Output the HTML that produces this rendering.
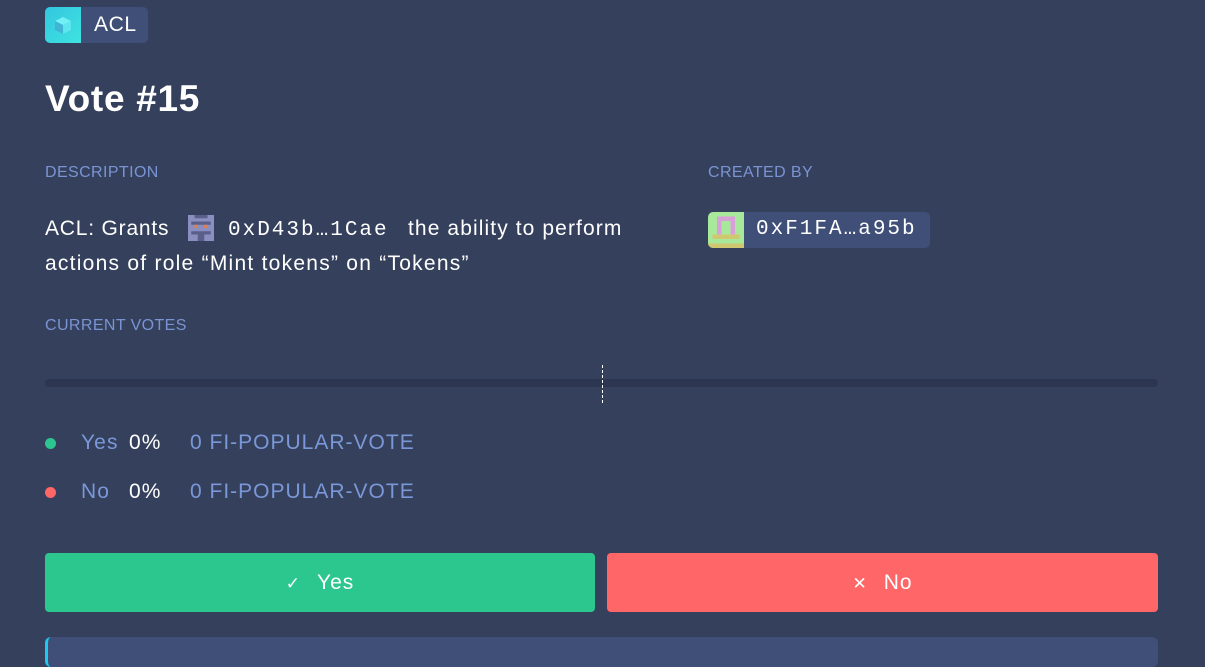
<!DOCTYPE html>
<html><head><meta charset="utf-8"><style>
*{box-sizing:border-box;margin:0;padding:0}
body{width:1205px;height:647px;overflow:hidden;background:#35415c;font-family:"Liberation Sans",sans-serif;color:#fff;position:relative}
.abs{position:absolute}
.lbl{font-size:16px;color:#7a93d4;letter-spacing:0.4px}
.mono{font-family:"Liberation Mono",monospace;letter-spacing:2px}
.blue{color:#7a97d8}
.txt{letter-spacing:1.1px}
</style></head><body>
<div class="abs" style="left:45px;top:7px;width:103px;height:36px;border-radius:5px;background:#3f4f77;overflow:hidden">
 <div class="abs" style="left:0;top:0;width:36px;height:36px;background:linear-gradient(135deg,#33c6e0,#3fe3e0)">
  <svg width="36" height="36" viewBox="0 0 36 36"><polygon points="18,10 26,14 18,18 10,14" fill="#72f0f6"/><polygon points="10,14 18,18 18,27 10,23" fill="#3fb4d4"/><polygon points="26,14 18,18 18,27 26,23" fill="#5ee6f0"/></svg>
 </div>
 <div class="abs" style="left:49px;top:6px;font-size:21px;letter-spacing:0.6px">ACL</div>
</div>
<div class="abs" style="left:45px;top:78px;font-size:37px;font-weight:bold;letter-spacing:0.7px">Vote #15</div>
<div class="abs lbl" style="left:45px;top:164px">DESCRIPTION</div>
<div class="abs lbl" style="left:708px;top:164px">CREATED BY</div>
<div class="abs" style="left:45px;top:211px;font-size:21px;line-height:36px;white-space:nowrap"><span class="txt" style="letter-spacing:0.8px">ACL: Grants</span></div>
<div class="abs" style="left:188px;top:215px;width:26px;height:26px;background:#8a8fc0"><svg width="26" height="26" viewBox="0 0 8 8" style="position:absolute;left:0;top:0"><rect x="2" y="0" width="4" height="1" fill="#5a5f8a"/><rect x="1" y="2" width="6" height="1" fill="#5a5f8a"/><rect x="2" y="3" width="1" height="1" fill="#e08050"/><rect x="5" y="3" width="1" height="1" fill="#e08050"/><rect x="1" y="5" width="6" height="1" fill="#5a5f8a"/><rect x="3" y="6" width="2" height="2" fill="#5a5f8a"/></svg></div>
<div class="abs mono" style="left:228px;top:213px;font-size:21px;line-height:36px">0xD43b…1Cae</div>
<div class="abs txt" style="left:408px;top:211px;font-size:21px;line-height:36px;white-space:nowrap">the ability to perform</div>
<div class="abs txt" style="left:45px;top:252px;font-size:21px;letter-spacing:1.25px">actions of role “Mint tokens” on “Tokens”</div>
<div class="abs" style="left:708px;top:212px;width:222px;height:36px;border-radius:5px;background:#3f4f77;overflow:hidden">
 <div class="abs" style="left:0;top:0;width:36px;height:36px;background:#a8e89a"><svg width="36" height="36" viewBox="0 0 8 8"><rect x="2" y="1" width="4" height="1" fill="#d8a0d8"/><rect x="2" y="2" width="1" height="2" fill="#d8a0d8"/><rect x="5" y="2" width="1" height="2" fill="#d8a0d8"/><rect x="1" y="5" width="6" height="1" fill="#d0c870"/><rect x="2" y="4" width="1" height="1" fill="#d8a0d8"/><rect x="5" y="4" width="1" height="1" fill="#d8a0d8"/><rect x="0" y="7" width="8" height="1" fill="#d0c870"/></svg></div>
 <div class="abs mono" style="left:48px;top:6px;font-size:21px">0xF1FA…a95b</div>
</div>
<div class="abs lbl" style="left:45px;top:317px">CURRENT VOTES</div>
<div class="abs" style="left:45px;top:379px;width:1113px;height:8px;border-radius:4px;background:#2c3650"></div>
<div class="abs" style="left:602px;top:365px;height:38px;border-left:1px dashed #fff"></div>
<div class="abs" style="left:45px;top:438px;width:11px;height:11px;border-radius:50%;background:#2cc68f"></div>
<div class="abs" style="left:45px;top:487px;width:11px;height:11px;border-radius:50%;background:#ff6668"></div>
<div class="abs blue txt" style="left:81px;top:431px;font-size:21px">Yes</div>
<div class="abs txt" style="left:129px;top:431px;font-size:21px">0%</div>
<div class="abs blue txt" style="left:190px;top:431px;font-size:21px;letter-spacing:1px">0 FI-POPULAR-VOTE</div>
<div class="abs blue txt" style="left:81px;top:480px;font-size:21px">No</div>
<div class="abs txt" style="left:129px;top:480px;font-size:21px">0%</div>
<div class="abs blue txt" style="left:190px;top:480px;font-size:21px;letter-spacing:1px">0 FI-POPULAR-VOTE</div>
<div class="abs" style="left:45px;top:553px;width:550px;height:59px;border-radius:4px;background:#2cc68f;text-align:center;line-height:59px;font-size:21px;letter-spacing:1px"><span style="font-size:17px;margin-right:16px">✓</span>Yes</div>
<div class="abs" style="left:607px;top:553px;width:551px;height:59px;border-radius:4px;background:#ff6668;text-align:center;line-height:59px;font-size:21px;letter-spacing:1px"><span style="font-size:17px;margin-right:16px">✕</span>No</div>
<div class="abs" style="left:45px;top:637px;width:1113px;height:30px;border-radius:6px;background:#3f4f77;border-left:3px solid #1fc8f0"></div>
</body></html>
